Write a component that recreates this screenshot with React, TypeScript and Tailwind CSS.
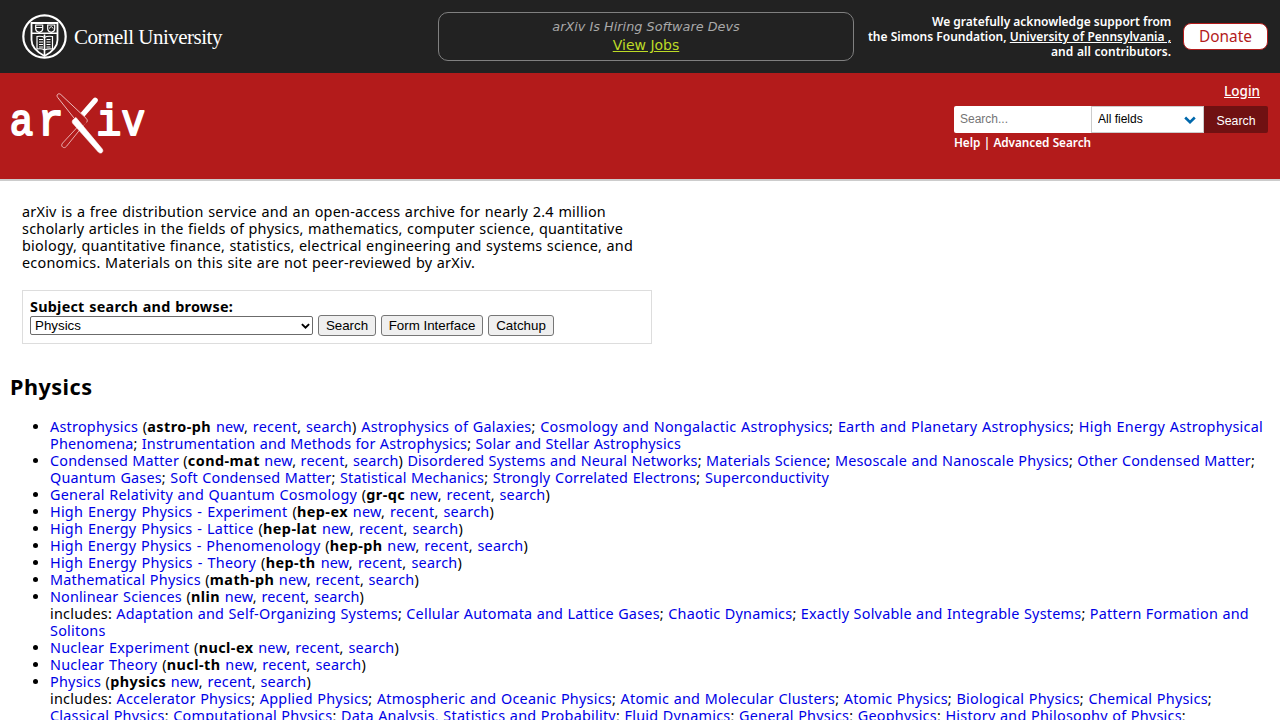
import type { ReactNode } from "react";

function A({ children }: { children: ReactNode }) {
  return (
    <a href="#" className="text-[#0000e6]">
      {children}
    </a>
  );
}

/* One typeset line, justified to the measure given by its width class. */
function Line({ w, children }: { w: string; children: ReactNode }) {
  return <span className={`block h-[17px] whitespace-nowrap [text-align-last:justify] ${w}`}>{children}</span>;
}

function Links({ names, end = "" }: { names: string[]; end?: string }) {
  return (
    <>
      {names.map((name, i) => (
        <span key={name}>
          <A>{name}</A>
          {i < names.length - 1 ? "; " : end}
        </span>
      ))}
    </>
  );
}

function Archive({ name, code }: { name: string; code: string }) {
  return (
    <>
      <A>{name}</A> (<b className="tracking-[0.45px]">{code}</b> <A>new</A>, <A>recent</A>, <A>search</A>)
    </>
  );
}

function CornellSeal() {
  return (
    <svg className="h-[46px] w-[46px] shrink-0" viewBox="0 0 46 46" fill="none" stroke="#fff">
      <circle cx="22.5" cy="22.5" r="21.2" strokeWidth="2.2" />
      <path d="M9.5 9h26v17c0 7-5.500 12-13 16-7.500-4-13-9-13-16z" strokeWidth="1.800" />
      <path d="M10 19.300h25M22.500 20.500V41" strokeWidth="1.600" />
      <path d="M13.700 11h7v4c0 1.700-1.500 2.800-3.500 3.400-2-.6-3.500-1.700-3.500-3.400zM25.700 11h7v4c0 1.700-1.500 2.800-3.500 3.400-2-.6-3.500-1.700-3.500-3.400z" strokeWidth="1.200" />
      <path d="M14 13.500h6.500M27 14.500l2.200-2 2.200 2" strokeWidth="1" />
      <path d="M15 22.500c3-.5 6 0 7.500 1 1.500-1 4.500-1.500 8-1V35c-3-.5-6 0-8 1-1.500-1-4.500-1.500-7.500-1z" strokeWidth="1.200" />
      <path d="M17 25.500h4M17 28h4M17 30.500h4M17 33h4M24.500 25.500h4M24.500 28h4M24.500 30.500h4M24.500 33h4" strokeWidth="1" />
    </svg>
  );
}

function ArxivLogo() {
  return (
    <svg className="block h-[64px] w-[140px]" viewBox="8 91 140 64" fill="none">
      <g
        fill="#fff"
        stroke="#fff"
        strokeWidth="2"
        strokeLinejoin="round"
        fontSize="45"
        className="font-['Liberation_Mono',monospace]"
      >
        <text transform="translate(9.700 135.200) scale(.87 1)">a</text>
        <text transform="translate(38 135.200) scale(.95 1)">r</text>
        <text transform="translate(96.300 135.200) scale(.93 1)">i</text>
        <text transform="translate(121.500 135.200) scale(.87 1)">v</text>
      </g>
      <path d="M86.500 121.500 66.500 146.300c-1.200 1.500-2.700 1.700-3.900.7s-1.200-2.500 0-3.900L77.500 127" stroke="#eebcbc" strokeWidth=".9" />
      <path d="M81 116.500 95.200 100.200" stroke="#fff" strokeWidth="5.200" strokeLinecap="round" />
      <path d="M74 118 57.800 97.600c-1-1.300-1-2.500-.1-3.300s2.300-.7 3.400.5L86 118.200c1.500 1.500 1.600 2.800.6 4.200L83 126z" fill="#b31b1b" />
      <path d="M74 118 57.800 97.600c-1-1.300-1-2.500-.1-3.300s2.300-.7 3.400.5L86 118.200c1.500 1.500 1.600 2.800.6 4.200" stroke="#f2cccc" strokeWidth=".9" />
      <path d="M76 117.500c-4 2.300-4.700 4.300-2.600 6.600L98.300 152c1.300 1.400 2.800 1.400 3.800.4s1-2.300 0-3.600z" fill="#fff" stroke="#fff" strokeWidth=".6" />
    </svg>
  );
}

function Chevron({ className }: { className: string }) {
  return (
    <svg className={className} viewBox="0 0 12 8" fill="none" stroke="currentColor" strokeWidth="2.600">
      <path d="M1.200 1.500 6 6.200l4.800-4.700" />
    </svg>
  );
}

function SmallButton({ children, w }: { children: ReactNode; w: string }) {
  return (
    <button
      className={`h-[21px] rounded-[3px] border border-[#767676] bg-[#efefef] text-center font-['Liberation_Sans',Arial,sans-serif] text-[13.333px] leading-[19px] tracking-normal text-black ${w}`}
    >
      {children}
    </button>
  );
}

export default function App() {
  return (
    <div className="h-[720px] w-[1280px] overflow-hidden bg-white font-['Noto_Sans','Open_Sans',sans-serif] text-[14.4px] leading-[17px] text-black">
      <div className="flex h-[73px] bg-[#222]">
        <div className="flex w-[438px] shrink-0 items-start gap-[6px] pt-[14px] pl-[22px]">
          <CornellSeal />
          <span className="pt-[10px] font-['Liberation_Serif',serif] text-[21px] leading-[26px] tracking-[-0.5px] whitespace-nowrap text-white">
            Cornell University
          </span>
        </div>
        <div className="mt-[12px] h-[49px] w-[416px] shrink-0 rounded-[10px] border border-[#808080] pt-[5px] text-center font-['DejaVu_Sans',Verdana,sans-serif]">
          <div className="text-[12.8px] leading-[18px] tracking-[0.02px] text-[#a9a9a9] italic">arXiv Is Hiring Software Devs</div>
          <a href="#" className="block text-[14px] leading-[19px] text-[#bddb26] underline">
            View Jobs
          </a>
        </div>
        <div className="flex w-[317px] shrink-0 flex-col items-end pt-[14px] text-[12px] leading-[15px] font-semibold text-white">
          <span className="block w-[239px] whitespace-nowrap [text-align-last:justify]">We gratefully acknowledge support from</span>
          <span className="block w-[303px] tracking-[-0.02px] whitespace-nowrap [text-align-last:justify]">
            the Simons Foundation, <a href="#" className="underline">University of Pennsylvania ,</a>
          </span>
          <span className="block w-[120px] whitespace-nowrap [text-align-last:justify]">and all contributors.</span>
        </div>
        <button className="mt-[23px] ml-[12px] h-[27px] w-[85px] rounded-[8px] border border-[#b31b1b] bg-white text-[15.4px] leading-[24px] text-[#b31b1b]">
          Donate
        </button>
      </div>

      <div className="flex h-[108px] justify-between border-b-2 border-[#ccc] bg-[#b31b1b] text-white">
        <div className="pt-[18px] pl-[8px]">
          <ArxivLogo />
        </div>
        <div className="mr-[12px] w-[314px] pt-[9px]">
          <a href="#" className="mr-[8px] block text-right text-[13.5px] leading-[18px] font-medium underline">
            Login
          </a>
          <div className="mt-[6px] flex h-[27px] font-['Liberation_Sans',Arial,sans-serif] text-[12px]">
            <input
              className="h-[27px] w-[137px] rounded-l-[2px] bg-white px-[6px] pb-[2px] text-black placeholder:text-[#757575]"
              placeholder="Search..."
            />
            <div className="relative h-[27px] w-[113px]">
              <select className="h-[27px] w-[113px] appearance-none border border-[#ccc] bg-white pb-0 pl-[6px] text-black">
                <option>All fields</option>
              </select>
              <Chevron className="pointer-events-none absolute top-[10px] right-[8px] h-[8px] w-[12px] text-[#0068ac]" />
            </div>
            <button className="h-[27px] w-[64px] rounded-r-[2px] bg-[#701112] pt-[4px] text-[12.3px] text-white">Search</button>
          </div>
          <div className="mt-[2px] w-[137px] text-[11.8px] leading-[15px] font-semibold tracking-[-0.05px] whitespace-nowrap [text-align-last:justify]">
            <a href="#">Help</a> | <a href="#">Advanced Search</a>
          </div>
        </div>
      </div>

      <main className="tracking-[0.24px]">
        <p className="mt-[22px] ml-[22px]">
          <Line w="w-[584px]">arXiv is a free distribution service and an open-access archive for nearly 2.4 million</Line>
          <Line w="w-[601px]">scholarly articles in the fields of physics, mathematics, computer science, quantitative</Line>
          <Line w="w-[611px]">biology, quantitative finance, statistics, electrical engineering and systems science, and</Line>
          <Line w="w-[453px]">economics. Materials on this site are not peer-reviewed by arXiv.</Line>
        </p>

        <div className="mt-[19px] ml-[22px] h-[54px] w-[630px] border border-[#ddd] pt-[7px] pl-[7px]">
          <b className="block h-[17px] w-[203px] whitespace-nowrap [text-align-last:justify]">Subject search and browse:</b>
          <div className="flex items-center gap-[5px]">
            <div className="relative h-[19px] w-[283px]">
              <select className="block h-[19px] w-[283px] appearance-none rounded-[2px] border border-[#6b6b6b] bg-white pl-[4px] font-['Liberation_Sans',Arial,sans-serif] text-[13.333px] leading-[17px] tracking-normal text-black">
                <option>Physics</option>
              </select>
              <Chevron className="pointer-events-none absolute top-[7px] right-[3px] h-[6px] w-[9px] text-black" />
            </div>
            <SmallButton w="w-[58px]">Search</SmallButton>
            <SmallButton w="w-[102px]">Form Interface</SmallButton>
            <SmallButton w="w-[66px]">Catchup</SmallButton>
          </div>
        </div>

        <h2 className="mt-[29px] ml-[10px] text-[21.6px] leading-[28px] font-bold tracking-[0.5px]">Physics</h2>

        <ul className="mt-[17px] ml-[50px] list-disc">
          <li>
            <Line w="w-[1213px]">
              <Archive name="Astrophysics" code="astro-ph" />{" "}
              <Links names={["Astrophysics of Galaxies", "Cosmology and Nongalactic Astrophysics", "Earth and Planetary Astrophysics", "High Energy Astrophysical"]} />
            </Line>
            <Line w="w-[631px] tracking-[0.18px]">
              <Links names={["Phenomena", "Instrumentation and Methods for Astrophysics", "Solar and Stellar Astrophysics"]} />
            </Line>
          </li>
          <li>
            <Line w="w-[1205px] tracking-[0.18px]">
              <Archive name="Condensed Matter" code="cond-mat" />{" "}
              <Links names={["Disordered Systems and Neural Networks", "Materials Science", "Mesoscale and Nanoscale Physics", "Other Condensed Matter"]} end=";" />
            </Line>
            <Line w="w-[779px] tracking-[0.18px]">
              <Links names={["Quantum Gases", "Soft Condensed Matter", "Statistical Mechanics", "Strongly Correlated Electrons", "Superconductivity"]} />
            </Line>
          </li>
          <li>
            <Line w="w-[500px]"><Archive name="General Relativity and Quantum Cosmology" code="gr-qc" /></Line>
          </li>
          <li>
            <Line w="w-[444px]"><Archive name="High Energy Physics - Experiment" code="hep-ex" /></Line>
          </li>
          <li>
            <Line w="w-[413px]"><Archive name="High Energy Physics - Lattice" code="hep-lat" /></Line>
          </li>
          <li>
            <Line w="w-[478px]"><Archive name="High Energy Physics - Phenomenology" code="hep-ph" /></Line>
          </li>
          <li>
            <Line w="w-[412px]"><Archive name="High Energy Physics - Theory" code="hep-th" /></Line>
          </li>
          <li>
            <Line w="w-[369px]"><Archive name="Mathematical Physics" code="math-ph" /></Line>
          </li>
          <li>
            <Line w="w-[314px] tracking-[0.15px]"><Archive name="Nonlinear Sciences" code="nlin" /></Line>
            <Line w="w-[1199px]">
              includes:{" "}
              <Links names={["Adaptation and Self-Organizing Systems", "Cellular Automata and Lattice Gases", "Chaotic Dynamics", "Exactly Solvable and Integrable Systems", "Pattern Formation and"]} />
            </Line>
            <Line w="w-[55px]"><A>Solitons</A></Line>
          </li>
          <li>
            <Line w="w-[349px]"><Archive name="Nuclear Experiment" code="nucl-ex" /></Line>
          </li>
          <li>
            <Line w="w-[316px]"><Archive name="Nuclear Theory" code="nucl-th" /></Line>
          </li>
          <li>
            <Line w="w-[261px]"><Archive name="Physics" code="physics" /></Line>
            <Line w="w-[1162px]">
              includes:{" "}
              <Links names={["Accelerator Physics", "Applied Physics", "Atmospheric and Oceanic Physics", "Atomic and Molecular Clusters", "Atomic Physics", "Biological Physics", "Chemical Physics"]} end=";" />
            </Line>
            <Line w="w-[1136px]">
              <Links names={["Classical Physics", "Computational Physics", "Data Analysis, Statistics and Probability", "Fluid Dynamics", "General Physics", "Geophysics", "History and Philosophy of Physics"]} end=";" />
            </Line>
          </li>
        </ul>
      </main>
    </div>
  );
}
